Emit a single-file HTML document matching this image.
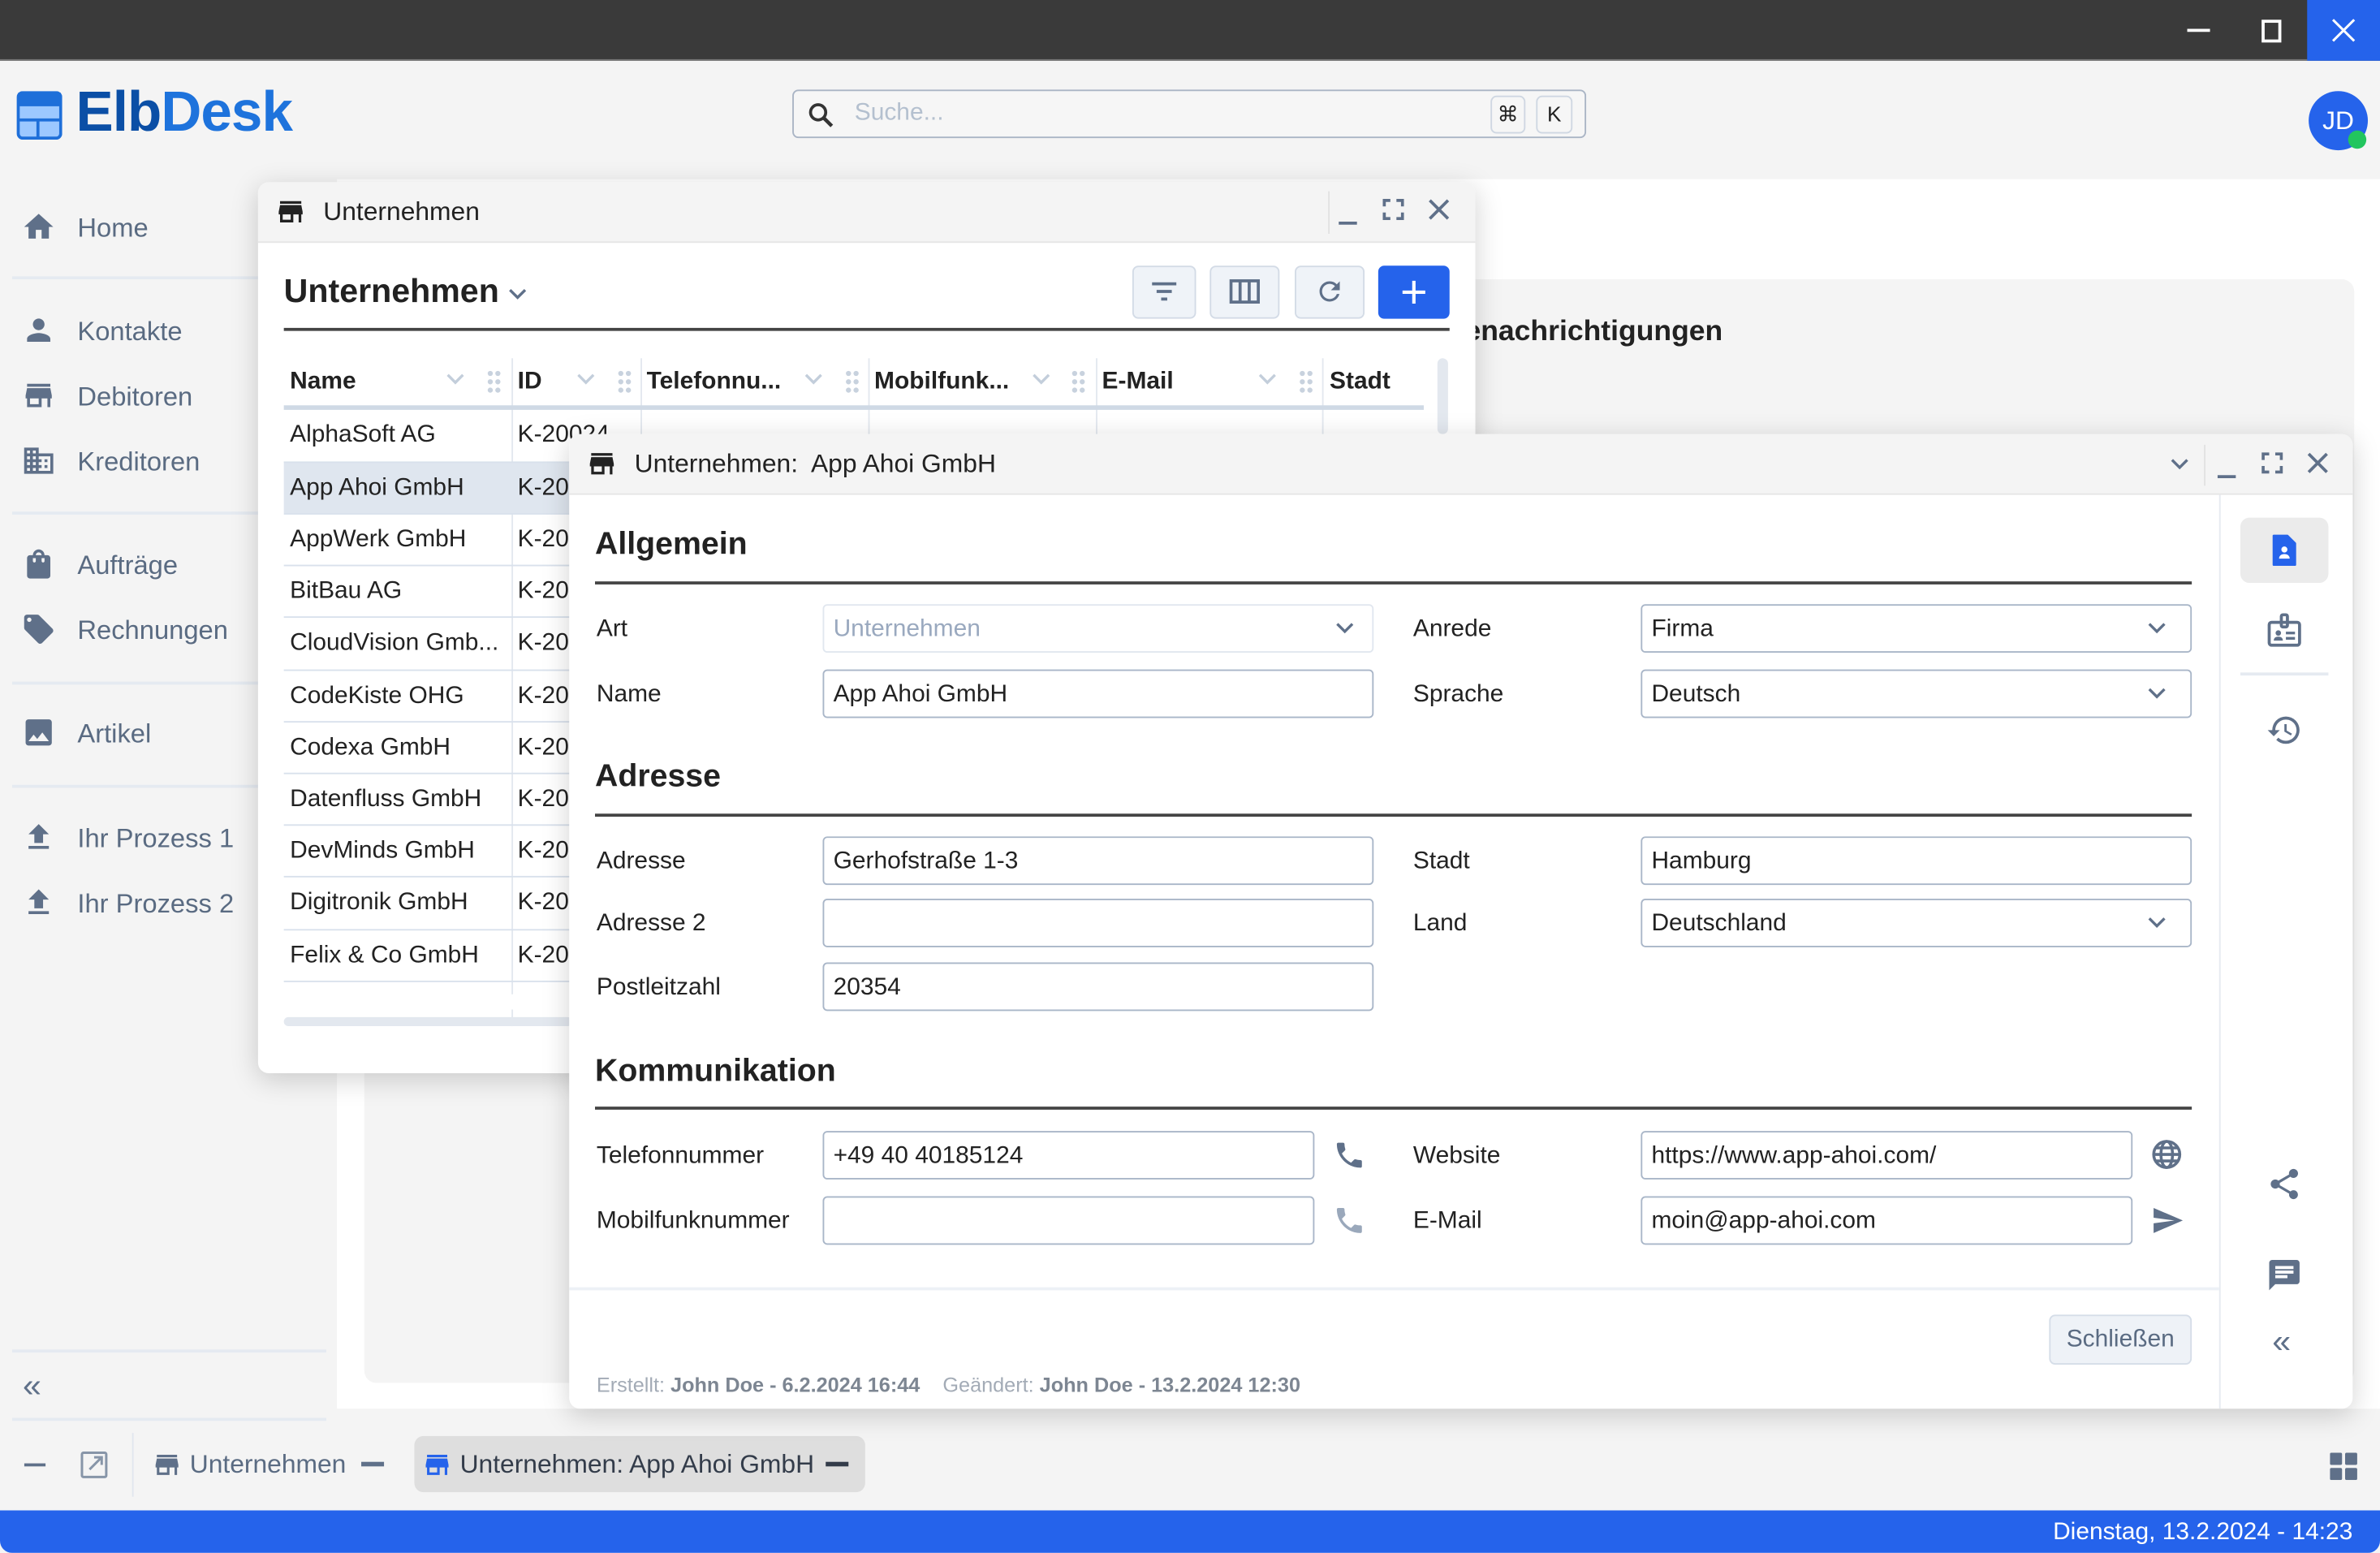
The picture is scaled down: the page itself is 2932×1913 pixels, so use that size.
<!DOCTYPE html>
<html><head><meta charset="utf-8">
<style>
*{box-sizing:border-box;margin:0;padding:0}
html,body{width:2932px;height:1913px;overflow:hidden;background:#f4f4f4}
body{font-family:"Liberation Sans",sans-serif;color:#222}
#w{position:absolute;left:0;top:0;width:1568px;height:1023px;transform:scale(1.8699);transform-origin:0 0;background:#f4f4f4;overflow:hidden}
.a{position:absolute}
svg{display:block}
.side{position:absolute;left:51px;font-size:17.5px;color:#5a6b82}
.sico{position:absolute;left:14px;width:23px;height:23px;fill:#5f7089}
.sep{position:absolute;left:8px;width:207px;height:2px;background:#e5eaf1}
.win{position:absolute;background:#fff;border-radius:7px;box-shadow:0 4px 18px rgba(0,0,0,.18);overflow:hidden}
.wh{position:absolute;left:0;top:0;right:0;height:40px;background:#f4f4f4;border-bottom:1px solid #e6e6e6}
.wt{position:absolute;font-size:17px;color:#222;top:10px}
.ctl{position:absolute;stroke:#5f7089;fill:none;stroke-width:2}
.tb{position:absolute;top:175px;height:35px;border:1px solid #d3dbe6;border-radius:4px;background:#eff3f8}
.th{position:absolute;top:243px;font-size:16px;font-weight:bold;color:#222}
.td{position:absolute;font-size:16px;color:#222}
.rl{position:absolute;left:187px;width:751px;height:1px;background:#d9e1ec}
.cl{position:absolute;top:236px;width:1px;height:440px;background:#e3e8ef}
.lbl{position:absolute;font-size:16px;color:#222;margin-top:1px}
.in{position:absolute;height:32px;border:1px solid #a9b6c8;border-radius:3px;background:#fff;font-size:16px;color:#222;padding:7px 6px 0}
.sec{position:absolute;left:392px;font-size:21px;font-weight:bold;color:#222}
.rule{position:absolute;left:392px;width:1052px;height:2px;background:#444}
.chev{position:absolute;width:12px;height:8px;stroke:#5f7089;fill:none;stroke-width:1.8}
.ri{position:absolute;width:24px;height:24px;fill:#5f7089}
</style></head><body><div id="w">

<div class="a" style="left:0;top:0;width:1568px;height:40px;background:#3a3a3a;border-bottom:1px solid #777"></div>
<div class="a" style="left:1441px;top:19px;width:15px;height:2px;background:#fff"></div>
<div class="a" style="left:1490px;top:13px;width:13px;height:15px;border:2px solid #fff"></div>
<div class="a" style="left:1520px;top:0;width:48px;height:40px;background:#2563eb"></div>
<svg class="a" style="left:1536px;top:12px" width="16" height="16"><path d="M1 1L15 15M15 1L1 15" stroke="#fff" stroke-width="1.6"/></svg>

<svg class="a" style="left:11px;top:60px" width="30" height="32"><rect x="1" y="1" width="28" height="30" rx="3" fill="#9cc8ff" stroke="#1e6fd9" stroke-width="2"/><rect x="1" y="1" width="28" height="9" fill="#1e6fd9"/><path d="M1 19H29M14 19V31" stroke="#1e6fd9" stroke-width="2"/></svg>
<div class="a" style="left:50px;top:53px;font-size:37px;font-weight:bold;letter-spacing:-0.5px"><span style="color:#0b4fa6">Elb</span><span style="color:#1e73dc">Desk</span></div>
<div class="a" style="left:522px;top:59px;width:523px;height:32px;border:1.5px solid #aab5c5;border-radius:4px;background:#f6f6f6"></div>
<svg class="a" style="left:532px;top:67px" width="18" height="18"><circle cx="7" cy="7" r="5" stroke="#333" stroke-width="2" fill="none"/><path d="M11 11L16 16" stroke="#333" stroke-width="2.4"/></svg>
<div class="a" style="left:563px;top:66px;font-size:16px;color:#b4c0cf">Suche...</div>
<div class="a" style="left:982px;top:63px;width:23px;height:25px;border:1px solid #cfd7e2;border-radius:4px;font-size:14px;text-align:center;line-height:23px;color:#222">⌘</div>
<div class="a" style="left:1012px;top:63px;width:24px;height:25px;border:1px solid #cfd7e2;border-radius:4px;font-size:14px;text-align:center;line-height:23px;color:#222">K</div>
<div class="a" style="left:1521px;top:60px;width:39px;height:39px;border-radius:50%;background:#2563eb;color:#fff;font-size:17px;text-align:center;line-height:39px">JD</div>
<div class="a" style="left:1547px;top:86px;width:12px;height:12px;border-radius:50%;background:#22c55e"></div>

<div class="a" style="left:222px;top:118px;width:1346px;height:810px;background:#fff"></div>
<div class="a" style="left:240px;top:184px;width:1311px;height:727px;background:#f4f4f4;border-radius:8px"></div>
<div class="a" style="left:965px;top:208px;font-size:19px;font-weight:bold;color:#222">enachrichtigungen</div>

<svg class="sico" style="top:138px" viewBox="0 0 24 24"><path d="M10 20v-6h4v6h5v-8h3L12 3 2 12h3v8z"/></svg>
<div class="side" style="top:140px">Home</div>
<div class="sep" style="top:182px"></div>
<svg class="sico" style="top:206px" viewBox="0 0 24 24"><path d="M12 12c2.21 0 4-1.790 4-4s-1.79-4-4-4-4 1.79-4 4 1.79 4 4 4zm0 2c-2.67 0-8 1.34-8 4v2h16v-2c0-2.66-5.33-4-8-4z"/></svg>
<div class="side" style="top:208px">Kontakte</div>
<svg class="sico" style="top:249px" viewBox="0 0 24 24"><path d="M20 4H4v2h16V4zm1 10v-2l-1-5H4l-1 5v2h1v6h10v-6h4v6h2v-6h1zm-9 4H6v-4h6v4z"/></svg>
<div class="side" style="top:251px">Debitoren</div>
<svg class="sico" style="top:292px" viewBox="0 0 24 24"><path d="M12 7V3H2v18h20V7H10zM6 19H4v-2h2v2zm0-4H4v-2h2v2zm0-4H4V9h2v2zm0-4H4V5h2v2zm4 12H8v-2h2v2zm0-4H8v-2h2v2zm0-4H8V9h2v2zm0-4H8V5h2v2zm10 12h-8v-2h2v-2h-2v-2h2v-2h-2V9h8v10zm-2-8h-2v2h2v-2zm0 4h-2v2h2v-2z"/></svg>
<div class="side" style="top:294px">Kreditoren</div>
<div class="sep" style="top:337px"></div>
<svg class="sico" style="top:360px" viewBox="0 0 24 24"><path d="M18 6h-2c0-2.2-1.8-4-4-4S8 3.8 8 6H6c-1.1 0-2 .9-2 2v12c0 1.1.9 2 2 2h12c1.1 0 2-.9 2-2V8c0-1.1-.9-2-2-2zm-8 4c0 .55-.45 1-1 1s-1-.45-1-1V8h2v2zm2-6c1.1 0 2 .9 2 2h-4c0-1.1.9-2 2-2zm4 6c0 .55-.45 1-1 1s-1-.45-1-1V8h2v2z"/></svg>
<div class="side" style="top:362px">Aufträge</div>
<svg class="sico" style="top:403px" viewBox="0 0 24 24"><path d="M21.41 11.58l-9-9C12.05 2.22 11.55 2 11 2H4c-1.1 0-2 .9-2 2v7c0 .55.22 1.05.59 1.42l9 9c.36.36.86.58 1.41.58s1.05-.22 1.41-.59l7-7c.37-.36.59-.86.59-1.41s-.23-1.06-.59-1.42zM5.5 7C4.67 7 4 6.33 4 5.5S4.67 4 5.5 4 7 4.67 7 5.5 6.33 7 5.5 7z"/></svg>
<div class="side" style="top:405px">Rechnungen</div>
<div class="sep" style="top:449px"></div>
<svg class="sico" style="top:471px" viewBox="0 0 24 24"><path d="M21 19V5c0-1.1-.9-2-2-2H5c-1.1 0-2 .9-2 2v14c0 1.1.9 2 2 2h14c1.1 0 2-.9 2-2zM8.5 13.5l2.5 3.01L14.5 12l4.5 6H5l3.5-4.5z"/></svg>
<div class="side" style="top:473px">Artikel</div>
<div class="sep" style="top:517px"></div>
<svg class="sico" style="top:540px" viewBox="0 0 24 24"><path d="M5 20h14v-2H5v2zm0-10h4v6h6v-6h4l-7-7-7 7z"/></svg>
<div class="side" style="top:542px">Ihr Prozess 1</div>
<svg class="sico" style="top:583px" viewBox="0 0 24 24"><path d="M5 20h14v-2H5v2zm0-10h4v6h6v-6h4l-7-7-7 7z"/></svg>
<div class="side" style="top:585px">Ihr Prozess 2</div>
<div class="sep" style="top:889px"></div>
<div class="a" style="left:15px;top:900px;font-size:22px;color:#5f7089">«</div>
<div class="sep" style="top:934px"></div>

<div class="a" style="left:16px;top:964px;width:14px;height:2px;background:#5f7089"></div>
<svg class="a" style="left:53px;top:956px" width="18" height="18"><rect x="1" y="1" width="16" height="16" rx="1" fill="none" stroke="#8795a8" stroke-width="1.6"/><path d="M6 12L14 4M9 4H14V9" stroke="#8795a8" stroke-width="1.6" fill="none"/></svg>
<div class="a" style="left:87px;top:944px;width:1px;height:42px;background:#e1e6ee"></div>
<svg class="a" style="left:100px;top:955px;fill:#5f7089" width="20" height="20" viewBox="0 0 24 24"><path d="M20 4H4v2h16V4zm1 10v-2l-1-5H4l-1 5v2h1v6h10v-6h4v6h2v-6h1zm-9 4H6v-4h6v4z"/></svg>
<div class="a" style="left:125px;top:955px;font-size:17px;color:#5a6b82">Unternehmen</div>
<div class="a" style="left:238px;top:963px;width:15px;height:3px;background:#5f7089"></div>
<div class="a" style="left:273px;top:946px;width:297px;height:37px;background:#dedede;border-radius:6px"></div>
<svg class="a" style="left:278px;top:955px;fill:#2563eb" width="20" height="20" viewBox="0 0 24 24"><path d="M20 4H4v2h16V4zm1 10v-2l-1-5H4l-1 5v2h1v6h10v-6h4v6h2v-6h1zm-9 4H6v-4h6v4z"/></svg>
<div class="a" style="left:303px;top:955px;font-size:17px;color:#333c4a;white-space:nowrap">Unternehmen: App Ahoi GmbH</div>
<div class="a" style="left:544px;top:963px;width:15px;height:3px;background:#333c4a"></div>
<svg class="a" style="left:1535px;top:957px" width="18" height="18"><rect x="0" y="0" width="8" height="8" rx="1" fill="#5f7089"/><rect x="10" y="0" width="8" height="8" rx="1" fill="#5f7089"/><rect x="0" y="10" width="8" height="8" rx="1" fill="#5f7089"/><rect x="10" y="10" width="8" height="8" rx="1" fill="#5f7089"/></svg>

<div class="a" style="left:0;top:995px;width:1568px;height:28px;background:#2563eb;border-radius:0 0 8px 8px"></div>
<div class="a" style="right:18px;top:1001px;font-size:16px;color:#fff">Dienstag, 13.2.2024 - 14:23</div>

<div class="win" style="left:170px;top:120px;width:802px;height:587px">
 <div class="wh"></div>
 <svg class="a" style="left:11px;top:9px;fill:#222" width="21" height="21" viewBox="0 0 24 24"><path d="M20 4H4v2h16V4zm1 10v-2l-1-5H4l-1 5v2h1v6h10v-6h4v6h2v-6h1zm-9 4H6v-4h6v4z"/></svg>
 <div class="wt" style="left:43px">Unternehmen</div>
 <div class="a" style="left:705px;top:6px;width:1px;height:28px;background:#e2e2e2"></div>
 <div class="a" style="left:712px;top:26px;width:12px;height:2px;background:#5f7089"></div>
 <svg class="ctl" style="left:741px;top:11px" width="14" height="14"><path d="M1 5V1H5M9 1H13V5M13 9V13H9M5 13H1V9"/></svg>
 <svg class="ctl" style="left:771px;top:11px" width="14" height="14"><path d="M1 1L13 13M13 1L1 13"/></svg>
</div>
<div class="a" style="left:187px;top:179px;font-size:22px;font-weight:bold;color:#222">Unternehmen</div>
<svg class="chev" style="left:335px;top:190px"><path d="M1 1L6 6L11 1"/></svg>
<div class="tb" style="left:746px;width:42px"></div>
<svg class="a" style="left:758px;top:185px" width="18" height="14"><path d="M1 2H17M4 7H14M7 12H11" stroke="#5f7089" stroke-width="2"/></svg>
<div class="tb" style="left:797px;width:46px"></div>
<svg class="a" style="left:810px;top:184px" width="20" height="16"><rect x="1" y="1" width="18" height="14" fill="none" stroke="#5f7089" stroke-width="2"/><path d="M7 1V15M13 1V15" stroke="#5f7089" stroke-width="2"/></svg>
<div class="tb" style="left:853px;width:46px"></div>
<svg class="a" style="left:866px;top:182px" width="20" height="20" viewBox="0 0 24 24"><path d="M17.65 6.35A7.958 7.958 0 0 0 12 4c-4.42 0-7.99 3.58-7.990 8s3.57 8 7.99 8c3.73 0 6.84-2.55 7.73-6h-2.08A5.99 5.99 0 0 1 12 18c-3.31 0-6-2.69-6-6s2.690-6 6-6c1.66 0 3.14.69 4.22 1.78L13 11h7V4l-2.35 2.35z" fill="#5f7089"/></svg>
<div class="a" style="left:908px;top:175px;width:47px;height:35px;background:#2563eb;border-radius:4px"></div>
<svg class="a" style="left:923px;top:184px" width="17" height="17"><path d="M8.5 1V16M1 8.5H16" stroke="#fff" stroke-width="2.2"/></svg>
<div class="a" style="left:187px;top:216px;width:768px;height:2px;background:#444"></div>
<div class="cl" style="left:337px"></div><div class="cl" style="left:422px"></div><div class="cl" style="left:572px"></div><div class="cl" style="left:722px"></div><div class="cl" style="left:871px"></div>
<div class="th" style="left:191px">Name</div>
<div class="th" style="left:341px">ID</div>
<div class="th" style="left:426px">Telefonnu...</div>
<div class="th" style="left:576px">Mobilfunk...</div>
<div class="th" style="left:726px">E-Mail</div>
<div class="th" style="left:876px">Stadt</div>
<svg class="chev" style="left:294px;top:246px;stroke:#c3cedb"><path d="M1 1L6 6L11 1"/></svg>
<svg class="chev" style="left:380px;top:246px;stroke:#c3cedb"><path d="M1 1L6 6L11 1"/></svg>
<svg class="chev" style="left:530px;top:246px;stroke:#c3cedb"><path d="M1 1L6 6L11 1"/></svg>
<svg class="chev" style="left:680px;top:246px;stroke:#c3cedb"><path d="M1 1L6 6L11 1"/></svg>
<svg class="chev" style="left:829px;top:246px;stroke:#c3cedb"><path d="M1 1L6 6L11 1"/></svg>
<svg class="a" style="left:321px;top:244px" width="9" height="15"><g fill="#c8d2de"><circle cx="2" cy="2" r="1.7"/><circle cx="7" cy="2" r="1.7"/><circle cx="2" cy="7.5" r="1.7"/><circle cx="7" cy="7.5" r="1.7"/><circle cx="2" cy="13" r="1.7"/><circle cx="7" cy="13" r="1.7"/></g></svg>
<svg class="a" style="left:407px;top:244px" width="9" height="15"><g fill="#c8d2de"><circle cx="2" cy="2" r="1.7"/><circle cx="7" cy="2" r="1.7"/><circle cx="2" cy="7.5" r="1.7"/><circle cx="7" cy="7.5" r="1.7"/><circle cx="2" cy="13" r="1.7"/><circle cx="7" cy="13" r="1.7"/></g></svg>
<svg class="a" style="left:557px;top:244px" width="9" height="15"><g fill="#c8d2de"><circle cx="2" cy="2" r="1.7"/><circle cx="7" cy="2" r="1.7"/><circle cx="2" cy="7.5" r="1.7"/><circle cx="7" cy="7.5" r="1.7"/><circle cx="2" cy="13" r="1.7"/><circle cx="7" cy="13" r="1.7"/></g></svg>
<svg class="a" style="left:706px;top:244px" width="9" height="15"><g fill="#c8d2de"><circle cx="2" cy="2" r="1.7"/><circle cx="7" cy="2" r="1.7"/><circle cx="2" cy="7.5" r="1.7"/><circle cx="7" cy="7.5" r="1.7"/><circle cx="2" cy="13" r="1.7"/><circle cx="7" cy="13" r="1.7"/></g></svg>
<svg class="a" style="left:856px;top:244px" width="9" height="15"><g fill="#c8d2de"><circle cx="2" cy="2" r="1.7"/><circle cx="7" cy="2" r="1.7"/><circle cx="2" cy="7.5" r="1.7"/><circle cx="7" cy="7.5" r="1.7"/><circle cx="2" cy="13" r="1.7"/><circle cx="7" cy="13" r="1.7"/></g></svg>
<div class="a" style="left:187px;top:267px;width:751px;height:3px;background:#cfd9e5"></div>
<div class="a" style="left:947px;top:236px;width:7px;height:50px;background:#e3e8ef;border-radius:4px"></div>
<div class="a" style="left:187px;top:304px;width:190px;height:34px;background:#dfe6ef"></div>
<div class="rl" style="top:304px"></div><div class="rl" style="top:338px"></div><div class="rl" style="top:372px"></div><div class="rl" style="top:406px"></div><div class="rl" style="top:441px"></div><div class="rl" style="top:475px"></div><div class="rl" style="top:509px"></div><div class="rl" style="top:543px"></div><div class="rl" style="top:577px"></div><div class="rl" style="top:612px"></div><div class="rl" style="top:646px"></div>
<div class="td" style="left:191px;top:278px">AlphaSoft AG</div><div class="td" style="left:341px;top:278px">K-20024</div>
<div class="td" style="left:191px;top:313px">App Ahoi GmbH</div><div class="td" style="left:341px;top:313px">K-20</div>
<div class="td" style="left:191px;top:347px">AppWerk GmbH</div><div class="td" style="left:341px;top:347px">K-20</div>
<div class="td" style="left:191px;top:381px">BitBau AG</div><div class="td" style="left:341px;top:381px">K-20</div>
<div class="td" style="left:191px;top:415px">CloudVision Gmb...</div><div class="td" style="left:341px;top:415px">K-20</div>
<div class="td" style="left:191px;top:450px">CodeKiste OHG</div><div class="td" style="left:341px;top:450px">K-20</div>
<div class="td" style="left:191px;top:484px">Codexa GmbH</div><div class="td" style="left:341px;top:484px">K-20</div>
<div class="td" style="left:191px;top:518px">Datenfluss GmbH</div><div class="td" style="left:341px;top:518px">K-20</div>
<div class="td" style="left:191px;top:552px">DevMinds GmbH</div><div class="td" style="left:341px;top:552px">K-20</div>
<div class="td" style="left:191px;top:586px">Digitronik GmbH</div><div class="td" style="left:341px;top:586px">K-20</div>
<div class="td" style="left:191px;top:621px">Felix &amp; Co GmbH</div><div class="td" style="left:341px;top:621px">K-20</div>
<div class="a" style="left:187px;top:655px;width:751px;height:10px;background:#fff"></div>
<div class="a" style="left:187px;top:670px;width:190px;height:6px;background:#e3e8ef;border-radius:3px"></div>

<div class="win" style="left:375px;top:286px;width:1175px;height:642px">
 <div class="wh"></div>
 <svg class="a" style="left:11px;top:9px;fill:#222" width="21" height="21" viewBox="0 0 24 24"><path d="M20 4H4v2h16V4zm1 10v-2l-1-5H4l-1 5v2h1v6h10v-6h4v6h2v-6h1zm-9 4H6v-4h6v4z"/></svg>
 <div class="wt" style="left:43px">Unternehmen:&nbsp; App Ahoi GmbH</div>
 <svg class="chev" style="left:1055px;top:16px"><path d="M1 1L6 6L11 1"/></svg>
 <div class="a" style="left:1077px;top:7px;width:1px;height:27px;background:#e2e2e2"></div>
 <div class="a" style="left:1086px;top:27px;width:12px;height:2px;background:#5f7089"></div>
 <svg class="ctl" style="left:1115px;top:12px" width="14" height="14"><path d="M1 5V1H5M9 1H13V5M13 9V13H9M5 13H1V9"/></svg>
 <svg class="ctl" style="left:1145px;top:12px" width="14" height="14"><path d="M1 1L13 13M13 1L1 13"/></svg>
 <div class="a" style="left:1087px;top:40px;width:1px;height:602px;background:#e6eaf0"></div>
 <div class="a" style="left:0;top:562px;width:1087px;height:2px;background:#edf1f6"></div>
</div>

<div class="sec" style="top:347px">Allgemein</div>
<div class="rule" style="top:383px"></div>
<div class="lbl" style="left:393px;top:405px">Art</div>
<div class="in" style="left:542px;top:398px;width:363px;border-color:#e1e7ef;color:#9aa9bf">Unternehmen</div>
<svg class="chev" style="left:880px;top:410px"><path d="M1 1L6 6L11 1"/></svg>
<div class="lbl" style="left:931px;top:405px">Anrede</div>
<div class="in" style="left:1081px;top:398px;width:363px">Firma</div>
<svg class="chev" style="left:1415px;top:410px"><path d="M1 1L6 6L11 1"/></svg>
<div class="lbl" style="left:393px;top:448px">Name</div>
<div class="in" style="left:542px;top:441px;width:363px">App Ahoi GmbH</div>
<div class="lbl" style="left:931px;top:448px">Sprache</div>
<div class="in" style="left:1081px;top:441px;width:363px">Deutsch</div>
<svg class="chev" style="left:1415px;top:453px"><path d="M1 1L6 6L11 1"/></svg>

<div class="sec" style="top:500px">Adresse</div>
<div class="rule" style="top:536px"></div>
<div class="lbl" style="left:393px;top:558px">Adresse</div>
<div class="in" style="left:542px;top:551px;width:363px">Gerhofstraße 1-3</div>
<div class="lbl" style="left:931px;top:558px">Stadt</div>
<div class="in" style="left:1081px;top:551px;width:363px">Hamburg</div>
<div class="lbl" style="left:393px;top:599px">Adresse 2</div>
<div class="in" style="left:542px;top:592px;width:363px"></div>
<div class="lbl" style="left:931px;top:599px">Land</div>
<div class="in" style="left:1081px;top:592px;width:363px">Deutschland</div>
<svg class="chev" style="left:1415px;top:604px"><path d="M1 1L6 6L11 1"/></svg>
<div class="lbl" style="left:393px;top:641px">Postleitzahl</div>
<div class="in" style="left:542px;top:634px;width:363px">20354</div>

<div class="sec" style="top:694px">Kommunikation</div>
<div class="rule" style="top:729px"></div>
<div class="lbl" style="left:393px;top:752px">Telefonnummer</div>
<div class="in" style="left:542px;top:745px;width:324px">+49 40 40185124</div>
<svg class="a" style="left:878px;top:750px;fill:#5f7089" width="22" height="22" viewBox="0 0 24 24"><path d="M6.62 10.79c1.44 2.83 3.76 5.14 6.59 6.59l2.2-2.2c.27-.27.67-.36 1.02-.24 1.12.37 2.33.57 3.57.57.55 0 1 .45 1 1V20c0 .55-.45 1-1 1-9.39 0-17-7.61-17-17 0-.55.45-1 1-1h3.5c.55 0 1 .45 1 1 0 1.25.2 2.45.57 3.57.11.35.03.74-.25 1.02l-2.2 2.2z"/></svg>
<div class="lbl" style="left:931px;top:752px">Website</div>
<div class="in" style="left:1081px;top:745px;width:324px">https://www.app-ahoi.com/</div>
<svg class="a" style="left:1417px;top:750px" width="21" height="21" viewBox="0 0 22 22"><g fill="none" stroke="#5f7089" stroke-width="2"><circle cx="11" cy="11" r="9"/><ellipse cx="11" cy="11" rx="4" ry="9"/><path d="M2 11H20M3.5 6.5H18.5M3.5 15.5H18.5"/></g></svg>
<div class="lbl" style="left:393px;top:795px">Mobilfunknummer</div>
<div class="in" style="left:542px;top:788px;width:324px"></div>
<svg class="a" style="left:878px;top:793px;fill:#9aa8bb" width="22" height="22" viewBox="0 0 24 24"><path d="M6.62 10.79c1.44 2.83 3.76 5.14 6.59 6.59l2.2-2.2c.27-.27.67-.36 1.02-.24 1.12.37 2.33.57 3.57.57.55 0 1 .45 1 1V20c0 .55-.45 1-1 1-9.39 0-17-7.61-17-17 0-.55.45-1 1-1h3.5c.55 0 1 .45 1 1 0 1.25.2 2.45.57 3.57.11.35.03.74-.25 1.02l-2.2 2.2z"/></svg>
<div class="lbl" style="left:931px;top:795px">E-Mail</div>
<div class="in" style="left:1081px;top:788px;width:324px">moin@app-ahoi.com</div>
<svg class="a" style="left:1417px;top:793px;fill:#5f7089" width="22" height="22" viewBox="0 0 24 24"><path d="M2.01 21L23 12 2.01 3 2 10l15 2-15 2z"/></svg>

<div class="a" style="left:1350px;top:866px;width:94px;height:33px;background:#eef2f7;border:1px solid #d5dde8;border-radius:4px;font-size:16px;color:#5a6b82;text-align:center;line-height:31px">Schließen</div>
<div class="a" style="left:393px;top:905px;font-size:13.5px;color:#a3abb6">Erstellt: <b style="color:#7d8692">John Doe - 6.2.2024 16:44</b>&nbsp;&nbsp;&nbsp;&nbsp;Geändert: <b style="color:#7d8692">John Doe - 13.2.2024 12:30</b></div>

<div class="a" style="left:1476px;top:341px;width:58px;height:43px;background:#ebebeb;border-radius:6px"></div>
<svg class="a" style="left:1494px;top:352px" width="22" height="22" viewBox="0 0 22 22"><path d="M4 1H13L18 6V20H4Z" fill="#2563eb" stroke="#2563eb" stroke-linejoin="round" stroke-width="1.5"/><circle cx="11" cy="10" r="2" fill="#fff"/><path d="M7.5 16c0-2 1.6-3 3.5-3s3.5 1 3.5 3z" fill="#fff"/></svg>
<svg class="a" style="left:1493px;top:403px" width="24" height="24" viewBox="0 0 24 24"><g fill="none" stroke="#5f7089" stroke-width="2"><rect x="2" y="7" width="20" height="15" rx="1.5"/><rect x="10" y="2" width="4" height="8" rx="1"/></g><circle cx="8" cy="14" r="1.8" fill="#5f7089"/><path d="M5 19c0-2 1.5-2.6 3-2.6s3 .6 3 2.6z" fill="#5f7089"/><path d="M13 14H19M13 17.5H19" stroke="#5f7089" stroke-width="1.8"/></svg>
<div class="a" style="left:1476px;top:443px;width:58px;height:2px;background:#e5eaf1"></div>
<svg class="ri" style="left:1493px;top:469px" viewBox="0 0 24 24"><path d="M13 3a9 9 0 0 0-9 9H1l3.89 3.89.07.14L9 12H6c0-3.87 3.13-7 7-7s7 3.13 7 7-3.13 7-7 7c-1.93 0-3.68-.79-4.94-2.06l-1.42 1.42A8.954 8.954 0 0 0 13 21a9 9 0 0 0 0-18zm-1 5v5l4.28 2.54.72-1.21-3.5-2.08V8H12z"/></svg>
<svg class="ri" style="left:1493px;top:768px" viewBox="0 0 24 24"><path d="M18 16.08c-.76 0-1.44.3-1.96.77L8.91 12.7c.05-.23.09-.46.09-.7s-.04-.47-.09-.7l7.05-4.11c.54.5 1.25.81 2.04.81 1.66 0 3-1.34 3-3s-1.34-3-3-3-3 1.34-3 3c0 .24.04.47.09.7L8.04 9.81C7.5 9.31 6.79 9 6 9c-1.66 0-3 1.34-3 3s1.34 3 3 3c.79 0 1.5-.31 2.04-.81l7.12 4.16c-.05.21-.08.43-.08.65 0 1.61 1.31 2.92 2.92 2.92s2.92-1.31 2.92-2.92-1.31-2.92-2.92-2.92z"/></svg>
<svg class="ri" style="left:1493px;top:828px" viewBox="0 0 24 24"><path d="M20 2H4c-1.1 0-2 .9-2 2v18l4-4h14c1.1 0 2-.9 2-2V4c0-1.1-.9-2-2-2zM6 9h12v2H6V9zm8 5H6v-2h8v2zm4-6H6V6h12v2z"/></svg>
<div class="a" style="left:1497px;top:871px;font-size:22px;color:#5f7089">«</div>

</div></body></html>
